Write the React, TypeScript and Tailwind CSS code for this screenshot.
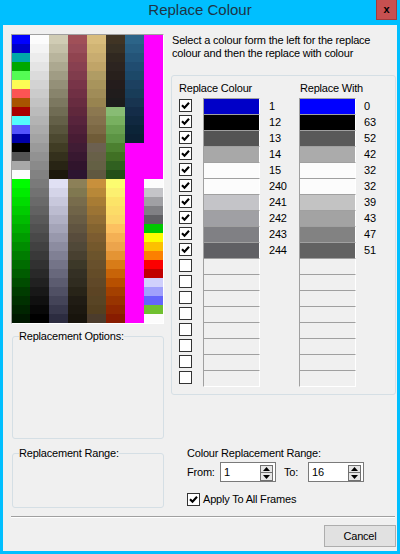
const col0 = [
  "#0000FF", "#0000C8", "#00A8A8", "#00A800", "#54FC54", "#FCFC54", "#FC5454", "#A85400",
  "#A80000", "#54FCFC", "#5454FC", "#0000A8", "#000000", "#545454", "#A8A8A8", "#FCFCFC",
  "#00FC00", "#00EC00", "#00DC00", "#00CC00", "#00BC00", "#00AC00", "#009C00", "#008C00",
  "#007C00", "#006C00", "#005C00", "#004C00", "#003C00", "#003000", "#002400", "#001800",
];

const col1 = Array.from({ length: 32 }, (_, i) => {
  const v = Math.round(252 - (i * 252) / 31);
  return `rgb(${v},${v},${v})`;
});

const col2 = [
  "#D0CCB4", "#C4C0A8", "#B8B49C", "#ACA890", "#A09C84", "#949078", "#88846C", "#7C7860",
  "#706C54", "#646048", "#58543C", "#4C4830", "#403C24", "#34301C", "#282414", "#1C180C",
  "#E0E0F4", "#D4D4E8", "#C8C8DC", "#BCBCD0", "#B0B0C4", "#A4A4B8", "#9898AC", "#8C8CA0",
  "#808094", "#747488", "#68687C", "#5C5C70", "#505064", "#444458", "#38384C", "#2C2C40",
];

const col3 = [
  "#A05058", "#984C58", "#904450", "#884050", "#803C4C", "#783448", "#703044", "#682C40",
  "#60283C", "#58243C", "#502038", "#481C34", "#401C34", "#381830", "#30142C", "#2C1430",
  "#8C8058", "#807850", "#786C4C", "#706448", "#685C44", "#605440", "#584C3C", "#504838",
  "#484030", "#3C3828", "#343024", "#302C20", "#282418", "#201C14", "#1C1810", "#18140C",
];

const col4 = [
  "#D8BC7C", "#D0B474", "#C8AC70", "#C0A468", "#B09C64", "#A8945C", "#A08C58", "#988450",
  "#8C7850", "#84704C", "#7C6844", "#705C38", "#6C6050", "#686048", "#646044", "#605840",
  "#C8903C", "#B88838", "#A87C34", "#9C7434", "#906C34", "#846430", "#7C5C30", "#74582C",
  "#6C542C", "#68502C", "#644C28", "#604828", "#5C4424", "#584424", "#544020", "#4C3C2C",
];

const col5 = [
  "#403424", "#383024", "#302820", "#2C2420", "#28201C", "#241C1C", "#201C1C", "#1C1C1C",
  "#88BC74", "#78B060", "#68A050", "#5C9444", "#4C8030", "#407024", "#306020", "#245018",
  "#FCFC70", "#FCF070", "#FCE468", "#FCDC68", "#FCD468", "#FCC060", "#F4B054", "#ECA44C",
  "#E49434", "#D87C18", "#C86408", "#B85000", "#A44000", "#983400", "#902800", "#881C00",
];

const col6 = [
  "#2C6488", "#285C80", "#245478", "#204C70", "#1C4868", "#1C4060", "#183C58", "#183450",
  "#142C48", "#102840", "#0C2438", "#0C2034",
  ...Array(20).fill("#FF00FF"),
];

const col7 = [
  ...Array(16).fill("#FF00FF"),
  "#FCFCFC", "#C4C4C8", "#A0A0A4", "#808084", "#606064", "#00C800", "#FCFC00", "#FCC000",
  "#FC8000", "#FC0000", "#C00000", "#D0D0FC", "#A0A0FC", "#6464FC", "#70C030", "#FCFCFC",
];

const palette: string[] = [...col0, ...col1, ...col2, ...col3, ...col4, ...col5, ...col6, ...col7];

interface Replacement {
  from: number;
  to: number;
}

const replacements: Replacement[] = [
  { from: 1, to: 0 },
  { from: 12, to: 63 },
  { from: 13, to: 52 },
  { from: 14, to: 42 },
  { from: 15, to: 32 },
  { from: 240, to: 32 },
  { from: 241, to: 39 },
  { from: 242, to: 43 },
  { from: 243, to: 47 },
  { from: 244, to: 51 },
];

const rows: (Replacement | null)[] = [...replacements, ...Array(8).fill(null)];

function CheckBox({ on }: { on: boolean }) {
  return (
    <span className="flex items-center justify-center w-[13px] h-[13px] shrink-0 border border-[#333333] bg-white">
      {on && (
        <svg width="9" height="9" viewBox="0 0 9 9">
          <path d="M1 4.2 L3.5 6.8 L8 1.8" stroke="#000" strokeWidth="2.1" fill="none" />
        </svg>
      )}
    </span>
  );
}

function Swatch({ color, last }: { color?: string; last: boolean }) {
  return (
    <div
      className={`w-[57px] h-[16px] border-t border-l border-r border-t-[#A0A0A0] border-l-[#A0A0A0] border-r-white ${
        last ? "border-b border-b-white h-[17px]" : ""
      }`}
      style={{ backgroundColor: color ?? "#F0F0F0" }}
    />
  );
}

function SpinBox({ value }: { value: string }) {
  return (
    <div className="flex w-[56px] h-[20px] border border-[#7A7A7A] bg-white">
      <span className="flex-1 pl-[3px] leading-[18px]">{value}</span>
      <div className="flex flex-col w-[13px] mt-[2px] mr-[2px]">
        <div className="flex items-center justify-center h-[8px] border border-[#707070] bg-[#E6E6E6]">
          <svg width="7" height="4" viewBox="0 0 7 4">
            <path d="M3.5 0 L7 4 L0 4 Z" fill="#000" />
          </svg>
        </div>
        <div className="flex items-center justify-center h-[8px] border border-t-0 border-[#707070] bg-[#E6E6E6]">
          <svg width="7" height="4" viewBox="0 0 7 4">
            <path d="M0 0 L7 0 L3.5 4 Z" fill="#000" />
          </svg>
        </div>
      </div>
    </div>
  );
}

export default function App() {
  return (
    <div className="flex flex-col w-[400px] h-[554px] bg-[#00BFFF] font-['Liberation_Sans',Arial,sans-serif] text-[11px] leading-[13px] tracking-[-0.2px] text-black">
      {/* title bar */}
      <div className="grid grid-cols-[1fr_auto_1fr] h-[25px] shrink-0">
        <div />
        <div className="text-[15px] leading-[20px] tracking-normal text-[#1E3446]">Replace Colour</div>
        <div className="flex justify-end pr-[3px]">
          <div className="flex items-center justify-center w-[21px] h-[20px] bg-[#C75050] border border-[#A03C3C] border-t-0 text-[11px] font-bold">
            x
          </div>
        </div>
      </div>

      {/* client area */}
      <div className="flex flex-col flex-1 min-h-0 mx-[3px] mb-[3px] pt-[9px] pl-[8px] pr-[1px] bg-[#F0F0F0]">
        <div className="flex gap-[7px]">
          {/* left column */}
          <div className="flex flex-col w-[153px]">
            <div className="border border-t-[#A0A0A0] border-l-[#A0A0A0] border-r-white border-b-white">
              <div className="grid grid-flow-col grid-cols-[18px_repeat(7,19px)] grid-rows-[repeat(32,9px)]">
                {palette.map((c, i) => (
                  <div key={i} style={{ backgroundColor: c }} />
                ))}
              </div>
            </div>

            <fieldset className="mt-[6px] ml-[1px] w-[152px] border border-[#D5DFE5] rounded-[3px]">
              <legend className="ml-[6px]">Replacement Options:</legend>
              <div className="h-[95px]" />
            </fieldset>

            <fieldset className="mt-[8px] ml-[1px] w-[152px] border border-[#D5DFE5] rounded-[3px]">
              <legend className="ml-[6px]">Replacement Range:</legend>
              <div className="h-[47px]" />
            </fieldset>
          </div>

          {/* right column */}
          <div className="flex flex-col w-[225px]">
            <p className="pl-[1px]">Select a colour form the left for the replace colour and then the replace with colour</p>

            <div className="mt-[15px] pt-[6px] pb-[7px] border border-[#D5DFE5] rounded-[3px]">
              <div className="flex mb-[3px]">
                <span className="ml-[7px] w-[121px]">Replace Colour</span>
                <span>Replace With</span>
              </div>
              {rows.map((r, i) => (
                <div key={i} className="flex items-start h-[16px] last:h-[17px]">
                  <div className="ml-[7px] pt-[1px]">
                    <CheckBox on={r !== null} />
                  </div>
                  <div className="ml-[11px]">
                    <Swatch color={r ? palette[r.from] : undefined} last={i === rows.length - 1} />
                  </div>
                  <span className="w-[39px] pl-[9px] leading-[16px]">{r ? r.from : ""}</span>
                  <Swatch color={r ? palette[r.to] : undefined} last={i === rows.length - 1} />
                  <span className="pl-[8px] leading-[16px]">{r ? r.to : ""}</span>
                </div>
              ))}
            </div>

            <div className="flex flex-col pl-[16px]">
              <p className="mt-[52px]">Colour Replacement Range:</p>
              <div className="flex items-center mt-[2px]">
                <span className="w-[33px]">From:</span>
                <SpinBox value="1" />
                <span className="ml-[8px] w-[24px]">To:</span>
                <SpinBox value="16" />
              </div>
              <div className="flex items-center gap-[3px] mt-[11px]">
                <CheckBox on />
                <span>Apply To All Frames</span>
              </div>
            </div>
          </div>
        </div>

        <div className="mt-[8px] mr-[1px] border-t border-b border-t-[#A0A0A0] border-b-white" />

        <div className="flex justify-end mt-[7px]">
          <button className="w-[72px] h-[22px] bg-[#E1E1E1] border border-[#ADADAD] text-[11px]">Cancel</button>
        </div>
      </div>
    </div>
  );
}
